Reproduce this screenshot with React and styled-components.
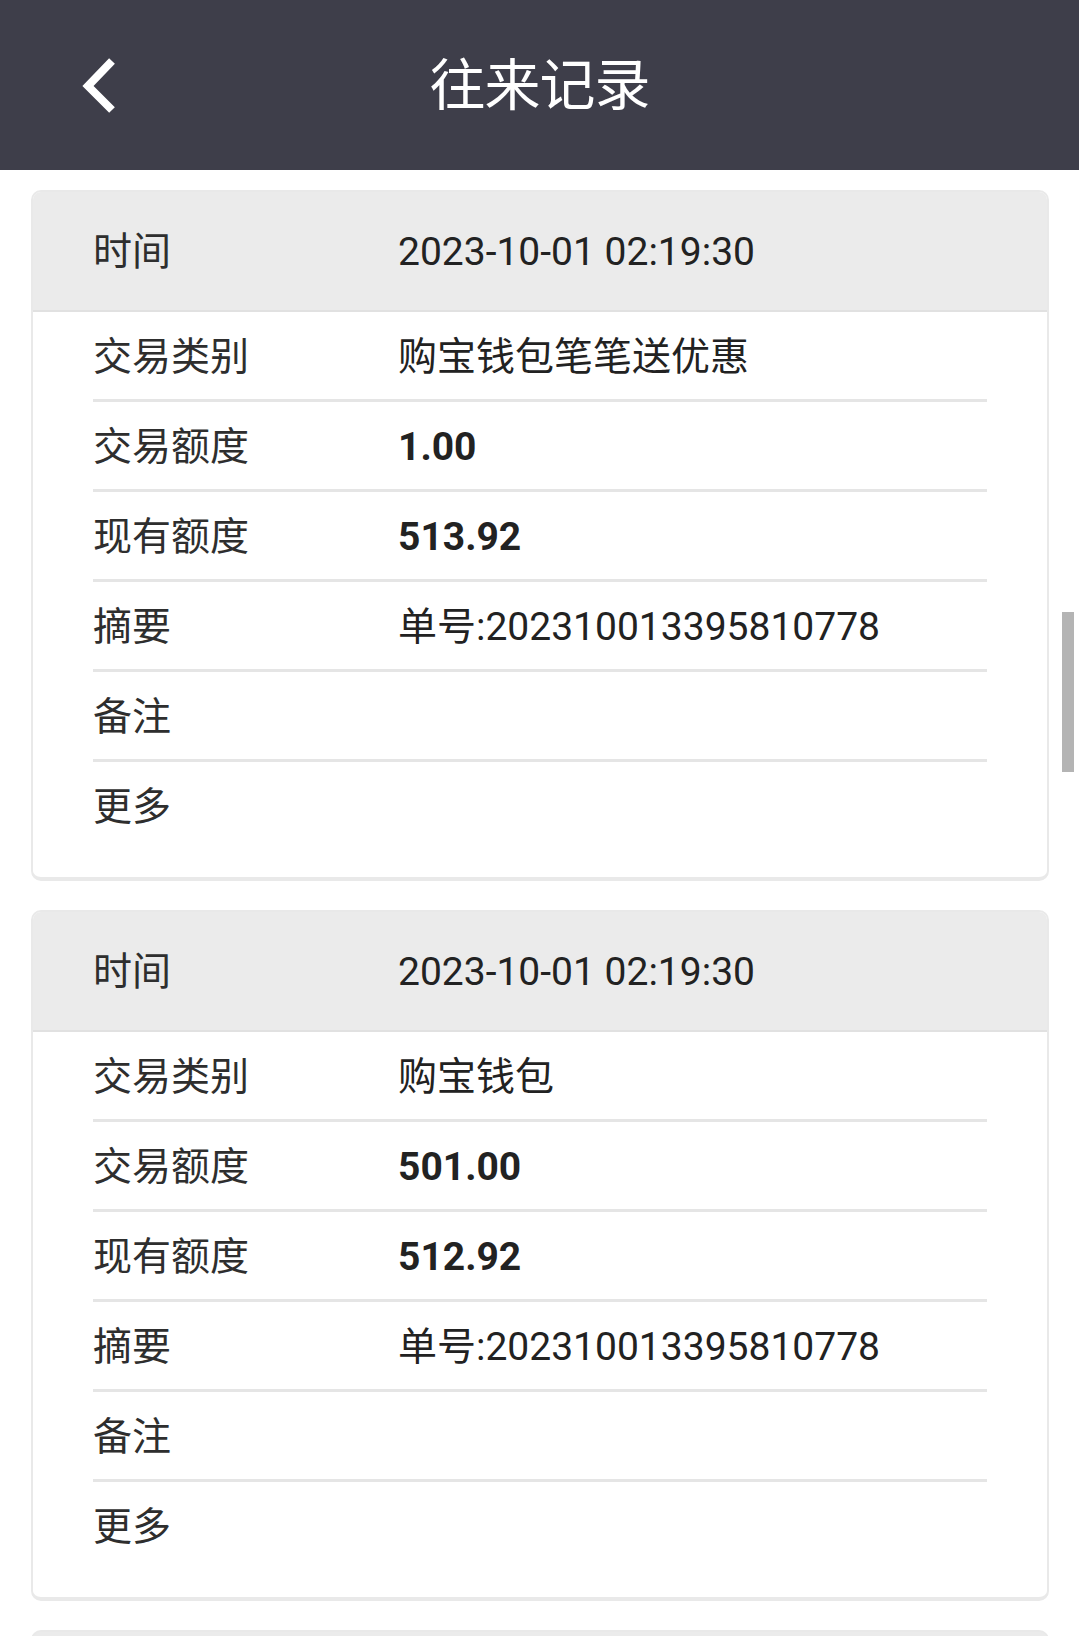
import React from "react";
import styled, { createGlobalStyle } from "styled-components";

const GlobalStyle = createGlobalStyle`
  html, body {
    margin: 0;
    padding: 0;
    background: #ffffff;
    overflow: hidden;
  }
  body {
    font-family: Roboto, "Noto Sans CJK SC", "Noto Sans", sans-serif;
  }
`;

const Page = styled.div`
  width: 1079px;
  height: 1636px;
  overflow: hidden;
  background: #fff;
`;

const TopBar = styled.header`
  height: 170px;
  background-color: #3e3e4a;
  display: grid;
  grid-template-columns: 200px 1fr 200px;
  align-items: center;
`;

const BackButton = styled.button`
  background: none;
  border: none;
  padding: 0 0 0 80px;
  margin: 0;
  height: 100%;
  display: flex;
  align-items: center;
  cursor: pointer;
`;

const Title = styled.h1`
  margin: 0;
  text-align: center;
  color: #ffffff;
  font-size: 56px;
  font-weight: 400;
  letter-spacing: -1px;
  line-height: 1;
  padding-top: 2px;
`;

const ListWrap = styled.div`
  display: flex;
  flex-direction: column;
  gap: 29px;
  padding: 20px 30px 0 31px;
`;

const Card = styled.section`
  border: 2px solid #e9e9e9;
  border-bottom-width: 4px;
  border-radius: 10px;
  overflow: hidden;
  background: #fff;
  padding-bottom: 28px;
`;

const CardHead = styled.div`
  height: 120px;
  box-sizing: border-box;
  background-color: #ebebeb;
  border-bottom: 2px solid #e1e1e1;
  display: flex;
  align-items: center;
  padding: 2px 60px 0;
`;

const Rows = styled.div`
  display: flex;
  flex-direction: column;
  padding: 0 60px;
`;

const Row = styled.div`
  height: 90px;
  box-sizing: border-box;
  display: flex;
  align-items: center;
  padding-top: 3px;
  border-bottom: 3px solid #e5e5e5;

  &:last-child {
    border-bottom: none;
    height: 87px;
  }
`;

const Label = styled.span`
  width: 305px;
  flex-shrink: 0;
  font-size: 39px;
  color: #2e2e2e;
  line-height: 1;
`;

const Value = styled.span`
  font-size: 39px;
  line-height: 1;
  color: #222;
  font-weight: ${props => (props.bold ? 700 : 400)};
`;

const ScrollThumb = styled.div`
  position: fixed;
  right: 5px;
  top: 612px;
  width: 12px;
  height: 160px;
  background-color: #b4b4b4;
`;

const NextCardEdge = styled.div`
  height: 40px;
  border: 2px solid #e9e9e9;
  border-bottom: none;
  border-radius: 10px 10px 0 0;
  background-color: #ebebeb;
`;

const records = [
  {
    time: "2023-10-01 02:19:30",
    type: "购宝钱包笔笔送优惠",
    amount: "1.00",
    balance: "513.92",
    summary: "单号:202310013395810778",
  },
  {
    time: "2023-10-01 02:19:30",
    type: "购宝钱包",
    amount: "501.00",
    balance: "512.92",
    summary: "单号:202310013395810778",
  },
];

function BackIcon() {
  return (
    <svg width="40" height="56" viewBox="0 0 40 56">
      <polyline
        points="32,4 8,29 32,53"
        fill="none"
        stroke="#ffffff"
        strokeWidth="8"
        strokeLinecap="butt"
        strokeLinejoin="miter"
      />
    </svg>
  );
}

function RecordCard({ item }) {
  return (
    <Card>
      <CardHead>
        <Label>时间</Label>
        <Value>{item.time}</Value>
      </CardHead>
      <Rows>
        <Row>
          <Label>交易类别</Label>
          <Value>{item.type}</Value>
        </Row>
        <Row>
          <Label>交易额度</Label>
          <Value bold>{item.amount}</Value>
        </Row>
        <Row>
          <Label>现有额度</Label>
          <Value bold>{item.balance}</Value>
        </Row>
        <Row>
          <Label>摘要</Label>
          <Value>{item.summary}</Value>
        </Row>
        <Row>
          <Label>备注</Label>
          <Value></Value>
        </Row>
        <Row>
          <Label>更多</Label>
          <Value></Value>
        </Row>
      </Rows>
    </Card>
  );
}

export default function App() {
  return (
    <Page>
      <GlobalStyle />
      <TopBar>
        <BackButton aria-label="返回">
          <BackIcon />
        </BackButton>
        <Title>往来记录</Title>
        <div />
      </TopBar>
      <ListWrap>
        {records.map((item, i) => (
          <RecordCard key={i} item={item} />
        ))}
        <NextCardEdge />
      </ListWrap>
      <ScrollThumb />
    </Page>
  );
}
